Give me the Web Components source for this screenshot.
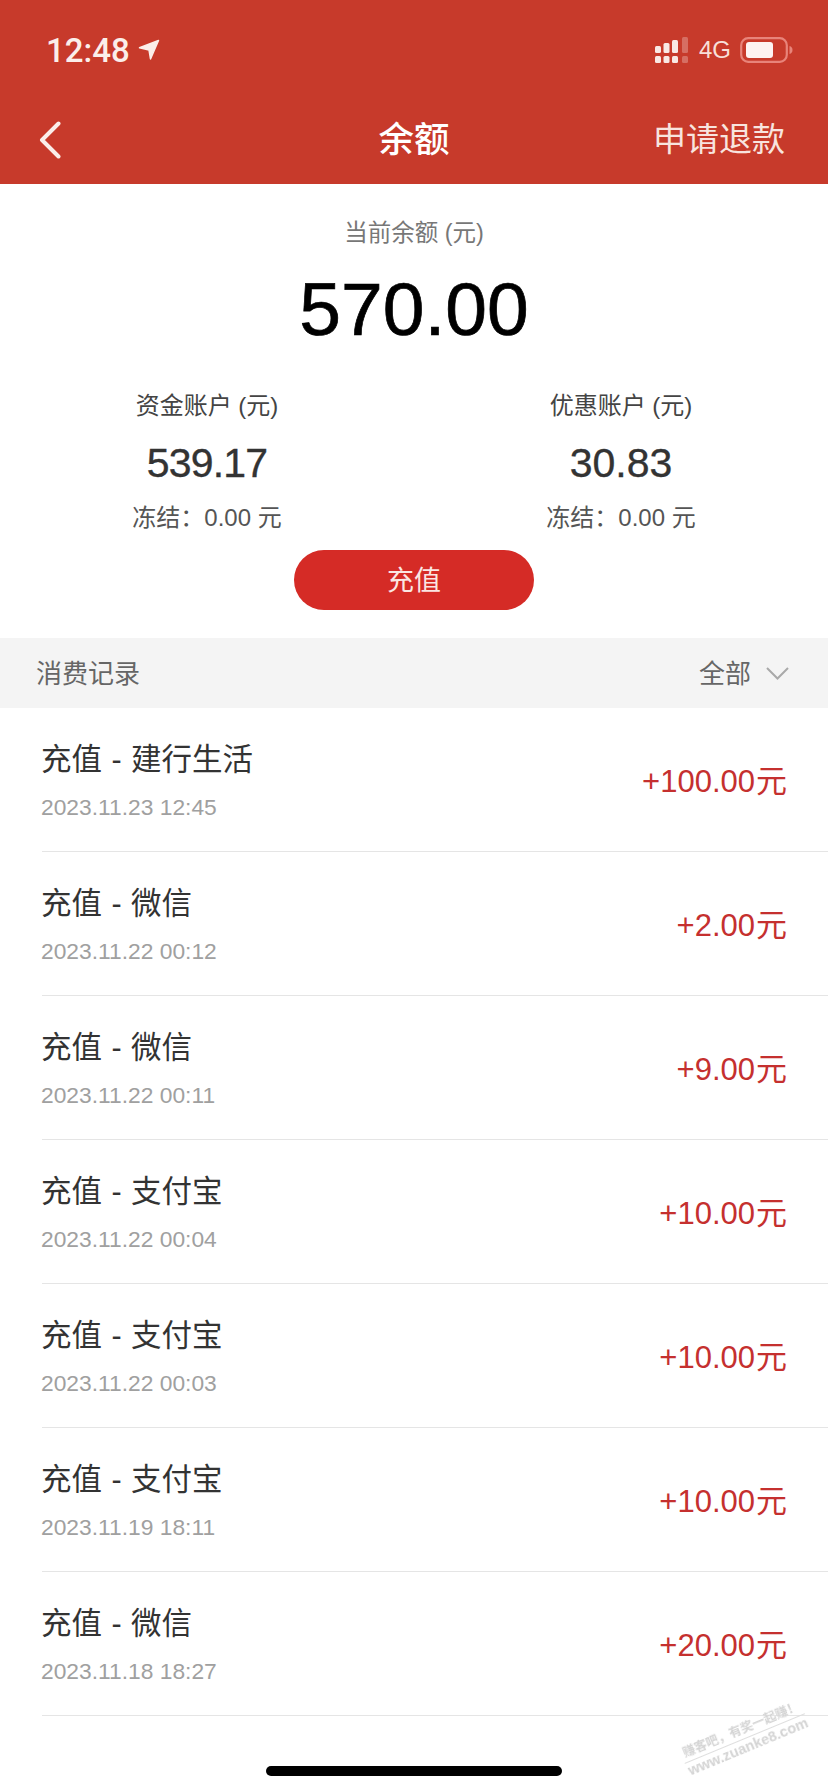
<!DOCTYPE html>
<html lang="zh-CN"><head><meta charset="utf-8"><title>余额</title>
<style>
html,body{margin:0;padding:0;background:#fff}
body{font-family:"Liberation Sans","Noto Sans CJK SC",sans-serif}
x-app{display:block;position:relative;width:828px;height:1792px;overflow:hidden;background:#fff}
</style></head><body>
<x-app>
  <x-status-bar></x-status-bar>
  <x-nav-bar title="余额" action="申请退款"></x-nav-bar>
  <x-balance total="570.00">
    <x-account slot="accounts" label="资金账户 (元)" value="539.17" frozen="0.00" style="--ls:-.8px"></x-account>
    <x-account slot="accounts" label="优惠账户 (元)" value="30.83" frozen="0.00"></x-account>
    <x-pill-button slot="action">充值</x-pill-button>
  </x-balance>
  <x-section-head title="消费记录" filter="全部"></x-section-head>
  <x-record title="充值 - 建行生活" date="2023.11.23 12:45" amount="+100.00"></x-record>
  <x-record title="充值 - 微信" date="2023.11.22 00:12" amount="+2.00"></x-record>
  <x-record title="充值 - 微信" date="2023.11.22 00:11" amount="+9.00"></x-record>
  <x-record title="充值 - 支付宝" date="2023.11.22 00:04" amount="+10.00"></x-record>
  <x-record title="充值 - 支付宝" date="2023.11.22 00:03" amount="+10.00"></x-record>
  <x-record title="充值 - 支付宝" date="2023.11.19 18:11" amount="+10.00"></x-record>
  <x-record title="充值 - 微信" date="2023.11.18 18:27" amount="+20.00"></x-record>
  <x-home-indicator></x-home-indicator>
  <x-watermark></x-watermark>
</x-app>
<script>
const CJK='"Liberation Sans","Noto Sans CJK SC",sans-serif';
function def(name,render){
  customElements.define(name,class extends HTMLElement{
    constructor(){super();this.attachShadow({mode:'open'});}
    connectedCallback(){this.shadowRoot.innerHTML=render(this);}
  });
}
const a=(e,n)=>e.getAttribute(n)||'';

def('x-status-bar',()=>`<style>
:host{display:flex;align-items:center;box-sizing:border-box;height:100px;padding:0 35px 0 46px;background:#c73a2b;color:#fff}
.time{font:500 33px/1 Roboto,sans-serif;color:#fbeeea}
.loc{margin-left:8px;display:block}
.sp{flex:1}
.g{font:400 24px/1 "Liberation Sans",sans-serif;margin:0 9px 0 11px;color:#f8dfd9}
svg{display:block}
</style>
<span class="time">12:48</span>
<svg class="loc" width="22" height="22" viewBox="0 0 22 22"><path d="M20.500 1.500 12.500 20 11 11 1.500 8.800Z" fill="#fbeeea" stroke="#fbeeea" stroke-width="1.500" stroke-linejoin="round"/></svg>
<span class="sp"></span>
<svg width="33" height="26" viewBox="0 0 33 26" fill="#f9e9e5">
<rect x="0" y="19" width="6" height="7" rx="1.500"/><rect x="8.500" y="19" width="6" height="7" rx="1.500"/><rect x="17" y="19" width="6" height="7" rx="1.500"/><rect x="27" y="19" width="6" height="7" rx="1.500" opacity=".3"/>
<rect x="0" y="9" width="6" height="7" rx="1.500"/><rect x="8.500" y="6" width="6" height="10" rx="1.500"/><rect x="17" y="3" width="6" height="13" rx="1.500"/><rect x="27" y="0" width="6" height="16" rx="1.500" opacity=".3"/>
</svg>
<span class="g">4G</span>
<svg width="53" height="26" viewBox="0 0 53 26"><rect x="1.200" y="1.200" width="45.600" height="23.600" rx="7" fill="none" stroke="#e8847a" stroke-width="2.200"/><rect x="6" y="5" width="27" height="16" rx="3" fill="#fdf3f1"/><path d="M49.500 9c2 .6 3 2 3 4s-1 3.400-3 4Z" fill="#e8847a"/></svg>`);

def('x-nav-bar',e=>`<style>
:host{display:grid;grid-template-columns:1fr auto 1fr;align-items:center;box-sizing:border-box;height:84px;padding:0 43px 4px 43px;background:#c73a2b;color:#fff;font-family:${CJK}}
.t{font-size:35.500px;font-weight:500;line-height:56px;color:#fff}
.r{justify-self:end;font-size:33px;line-height:56px;color:#f8e4df}
svg{display:block;margin-left:-4px}
</style>
<svg width="22" height="38" viewBox="0 0 22 38"><path d="M19.500 2.500 3 19l16.500 16.500" fill="none" stroke="#fbeeea" stroke-width="4" stroke-linecap="round" stroke-linejoin="round"/></svg>
<span class="t">${a(e,'title')}</span><span class="r">${a(e,'action')}</span>`);

def('x-balance',e=>`<style>
:host{display:flex;flex-direction:column;align-items:center;box-sizing:border-box;height:454px;padding-top:33px;background:#fff;font-family:${CJK}}
.l{font-size:23.500px;line-height:32px;color:#777}
.n{font-size:75px;line-height:80px;color:#000;margin-top:20px;-webkit-text-stroke:.7px #000}
.g{display:grid;grid-template-columns:1fr 1fr;width:100%;margin-top:41px}
.b{margin-top:16px}
</style>
<div class="l">当前余额 (元)</div><div class="n">${a(e,'total')}</div>
<div class="g"><slot name="accounts"></slot></div><div class="b"><slot name="action"></slot></div>`);

def('x-account',e=>`<style>
:host{display:flex;flex-direction:column;align-items:center;font-family:${CJK}}
.l{font-size:24px;line-height:32px;color:#444}
.v{font-size:41px;line-height:48px;color:#333;margin-top:17px;letter-spacing:var(--ls,0);-webkit-text-stroke:.35px #333}
.f{font-size:24px;line-height:32px;color:#555;margin-top:15px;white-space:pre}
</style>
<div class="l">${a(e,'label')}</div><div class="v">${a(e,'value')}</div><div class="f">冻结：${a(e,'frozen')} 元</div>`);

def('x-pill-button',()=>`<style>
:host{display:flex;align-items:center;justify-content:center;box-sizing:border-box;width:240px;height:60px;padding-bottom:3px;border-radius:30px;background:#d52b26;color:#fbe6e3;font-size:27px;font-family:${CJK}}
</style><slot></slot>`);

def('x-section-head',e=>`<style>
:host{display:flex;align-items:center;justify-content:space-between;box-sizing:border-box;height:70px;padding:0 39px 0 36px;background:#f4f4f4;color:#666;font-size:26px;font-family:${CJK}}
.f{display:flex;align-items:center;gap:15px}
.x{margin-bottom:4px}
svg{display:block}
</style>
<span class="x">${a(e,'title')}</span><span class="f"><span class="x">${a(e,'filter')}</span><svg width="23" height="13" viewBox="0 0 23 13"><path d="M1 1l10.500 10.500L22 1" fill="none" stroke="#a9a9a9" stroke-width="2"/></svg></span>`);

def('x-record',e=>`<style>
:host{display:flex;align-items:center;justify-content:space-between;box-sizing:border-box;height:144px;margin-left:42px;padding:0 41px 0 0;border-bottom:1px solid #e5e5e5;font-family:${CJK}}
.m{margin-left:-1px;padding-top:2px}
.t{font-size:30.500px;line-height:40px;color:#333;word-spacing:1px}
.d{font-size:22.800px;line-height:30px;color:#a0a0a0;margin-top:13px}
.a{font-size:31px;color:#c5302f;padding-bottom:2px}
.u{margin-left:1px}
</style>
<div class="m"><div class="t">${a(e,'title')}</div><div class="d">${a(e,'date')}</div></div><div class="a">${a(e,'amount')}<span class="u">元</span></div>`);

def('x-home-indicator',()=>`<style>
:host{display:block;position:absolute;left:266px;top:1766px;width:296px;height:10px;border-radius:5px;background:#000}
</style>`);

def('x-watermark',()=>`<style>
:host{display:block;position:absolute;left:680px;top:1722px;width:130px;transform:rotate(-22.500deg);transform-origin:center;color:#d4d4d4;font-family:${CJK};text-align:center;white-space:nowrap;filter:blur(.3px)}
.a{font-size:12.500px;line-height:15px;font-weight:700;border-bottom:1px solid #dedede;padding-bottom:1px}
.b{font-size:14.500px;line-height:17px;font-weight:700;font-family:"Liberation Sans",sans-serif}
</style><div class="a">赚客吧，有奖一起赚！</div><div class="b">www.zuanke8.com</div>`);
</script>
</body></html>
